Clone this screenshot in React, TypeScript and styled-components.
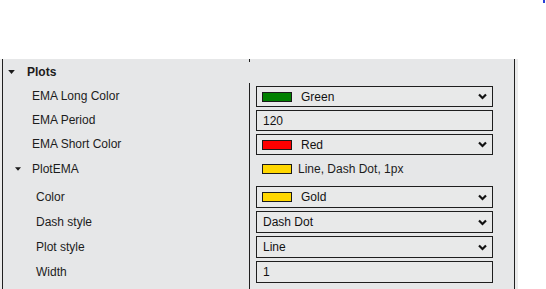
import React from 'react';
import styled, { createGlobalStyle } from 'styled-components';

const GlobalStyle = createGlobalStyle`
    html, body {
        margin: 0;
        background: #ffffff;
        font-family: "Liberation Sans", Arial, sans-serif;
        font-size: 12px;
        color: #1c1c1c;
    }
`

const Page = styled.div`
    position: relative;
    height: 289px;
    overflow: hidden;
    padding-top: 59px;
    box-sizing: border-box;
`

const CornerMark = styled.div`
    position: absolute;
    top: 0;
    right: 1px;
    width: 2px;
    height: 3px;
    background: #2b3fd6;
`

const Panel = styled.div`
    width: 518px;
    padding-left: 2px;
    box-sizing: border-box;
    background: #ebebeb;
`

const Grid = styled.div`
    width: 513px;
    box-sizing: border-box;
    border-left: 1px solid #202020;
    border-right: 1px solid #202020;
    background: #e6e7e8;
    min-height: 240px;
`

const Row = styled.div<{ $h: number }>`
    display: flex;
    height: ${p => p.$h}px;
`

const LabelCell = styled.div<{ $indent: number; $pad: number; $line: number }>`
    width: 246px;
    box-sizing: border-box;
    padding-left: ${p => p.$indent}px;
    padding-top: ${p => p.$pad}px;
    line-height: ${p => p.$line}px;
    display: flex;
    align-items: flex-start;
    white-space: nowrap;
`

const Category = styled.div<{ $bold: boolean; $gap: number; $h: number }>`
    display: flex;
    align-items: center;
    height: ${p => p.$h}px;
    font-weight: ${p => (p.$bold ? 'bold' : 'normal')};
    gap: ${p => p.$gap}px;
`

const ValueCell = styled.div<{ $divider: boolean; $pad: number }>`
    width: 265px;
    box-sizing: border-box;
    border-left: 1px solid ${p => (p.$divider ? '#202020' : 'transparent')};
    padding-left: 6px;
    padding-top: ${p => p.$pad}px;
    display: flex;
    flex-direction: column;
`

const Tick = styled.div`
    width: 1px;
    height: 3px;
    margin-left: -7px;
    background: #202020;
`

const Field = styled.div<{ $h: number }>`
    width: 237px;
    height: ${p => p.$h}px;
    box-sizing: border-box;
    border: 1px solid #1e1e1e;
    background: #e8e9e9;
    display: flex;
    align-items: center;
    padding-left: 5px;
    padding-right: 4px;
    color: #111;
`

const Swatch = styled.span<{ $color: string; $gap: number }>`
    width: 30px;
    height: 10px;
    box-sizing: border-box;
    border: 1px solid #1a1a1a;
    background: ${p => p.$color};
    margin-right: ${p => p.$gap}px;
    flex-shrink: 0;
`

const Summary = styled.div`
    display: flex;
    align-items: center;
    height: 22px;
    padding-left: 6px;
`

const TextValue = styled.span`
    padding-left: 1px;
`

const Chevron = styled.svg`
    margin-left: auto;
    margin-right: 1px;
`

const Arrow = ({ size }: { size: number }) => (
    <svg width={size} height={Math.round(size * 0.6)} viewBox="0 0 10 6" style={{ flexShrink: 0 }}>
        <polygon points="0,0 10,0 5,6" fill="#1a1a1a" />
    </svg>
)

const Caret = () => (
    <Chevron width="9" height="7" viewBox="0 0 9 7">
        <polyline points="1,1.5 4.5,5 8,1.5" fill="none" stroke="#111" strokeWidth="2.2" />
    </Chevron>
)

type Prop = {
    label: string;
    kind: 'select' | 'text';
    value: string;
    color?: string;
}

const plots: Prop[] = [
    { label: 'EMA Long Color', kind: 'select', value: 'Green', color: '#008000' },
    { label: 'EMA Period', kind: 'text', value: '120' },
    { label: 'EMA Short Color', kind: 'select', value: 'Red', color: '#ff0000' },
]

const plotEma: Prop[] = [
    { label: 'Color', kind: 'select', value: 'Gold', color: '#ffd700' },
    { label: 'Dash style', kind: 'select', value: 'Dash Dot' },
    { label: 'Plot style', kind: 'select', value: 'Line' },
    { label: 'Width', kind: 'text', value: '1' },
]

const PropertyRow = ({ prop, h, indent }: { prop: Prop; h: number; indent: number }) => (
    <Row $h={h}>
        <LabelCell $indent={indent} $pad={3} $line={h - 3}>{prop.label}</LabelCell>
        <ValueCell $divider $pad={3}>
            <Field $h={h - 3}>
                {prop.color && <Swatch $color={prop.color} $gap={8} />}
                <TextValue>{prop.value}</TextValue>
                {prop.kind === 'select' && <Caret />}
            </Field>
        </ValueCell>
    </Row>
)

export default function App() {
    return (
        <Page>
            <GlobalStyle />
            <CornerMark />
            <Panel>
                <Grid>
                    <Row $h={24}>
                        <LabelCell $indent={5} $pad={0} $line={24}>
                            <Category $bold $gap={12} $h={25}>
                                <Arrow size={7} />
                                Plots
                            </Category>
                        </LabelCell>
                        <ValueCell $divider={false} $pad={0}>
                            <Tick />
                        </ValueCell>
                    </Row>
                    {plots.map(p => (
                        <PropertyRow key={p.label} prop={p} h={24} indent={29} />
                    ))}
                    <Row $h={28}>
                        <LabelCell $indent={12} $pad={3} $line={22}>
                            <Category $bold={false} $gap={11} $h={22}>
                                <Arrow size={6} />
                                PlotEMA
                            </Category>
                        </LabelCell>
                        <ValueCell $divider $pad={3}>
                            <Summary>
                                <Swatch $color="#ffd700" $gap={6} />
                                Line, Dash Dot, 1px
                            </Summary>
                        </ValueCell>
                    </Row>
                    {plotEma.map(p => (
                        <PropertyRow key={p.label} prop={p} h={25} indent={33} />
                    ))}
                    <Row $h={10}>
                        <LabelCell $indent={0} $pad={0} $line={10} />
                        <ValueCell $divider $pad={0} />
                    </Row>
                </Grid>
            </Panel>
        </Page>
    )
}
